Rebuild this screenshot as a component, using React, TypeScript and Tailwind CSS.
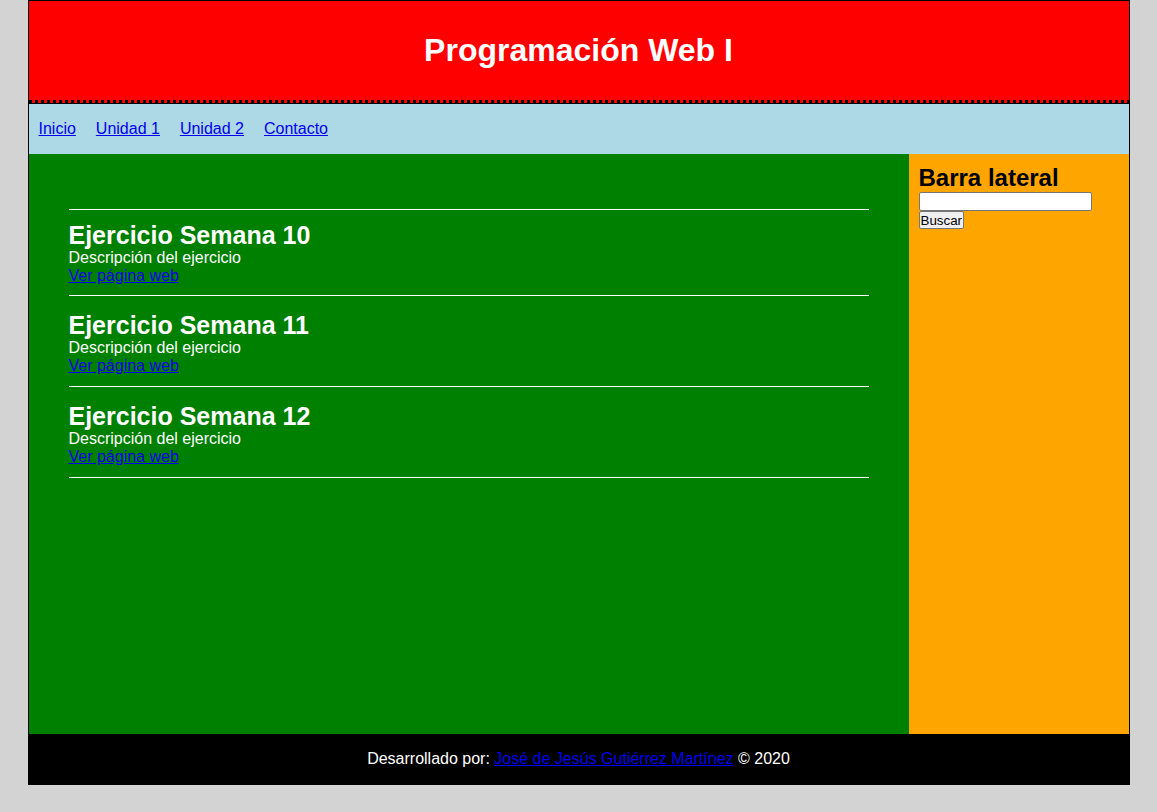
import React from "react";

// ---------- Data ----------
const ejercicios = [
  { semana: 10, pt: "pt-[11px]" },
  { semana: 11, pt: "pt-[15px]" },
  { semana: 12, pt: "pt-[15px]" },
];

const links = ["Inicio", "Unidad 1", "Unidad 2", "Contacto"];

// ---------- Page ----------
export default function App() {
  return (
    <div className="min-h-[812px] bg-[#d3d3d3] font-['Liberation_Sans',Arial,sans-serif]">
      <div className="mx-auto w-[1102px] border border-black">
        {/* Header */}
        <header className="flex h-[99px] items-center justify-center bg-[#ff0000]">
          <h1 className="text-[32px] font-bold leading-[37px] text-white">Programación Web I</h1>
        </header>
        {/* dashed separator */}
        <div className="h-[3px] bg-[repeating-linear-gradient(90deg,#000_0px,#000_3px,#ff0000_3px,#ff0000_6px)]"></div>

        {/* Nav */}
        <nav className="flex h-[51px] items-center gap-5 border-t border-black bg-[#add8e6] px-[10px] text-[16px] leading-[18px]">
          {links.map((l) => (
            <a key={l} href="#" className="text-[#0000ee] underline">
              {l}
            </a>
          ))}
        </nav>

        {/* Main + sidebar */}
        <div className="flex h-[580px]">
          <main className="w-[880px] bg-[#008000] px-10 pt-[55px]">
            <div className="border-t border-white">
              {ejercicios.map((e, i) => (
                <article
                  key={e.semana}
                  className={`${e.pt} border-b border-white ${i === 0 ? "pb-[10px]" : "pb-[11px]"}`}
                >
                  <h2 className="text-[25px] font-bold leading-[28px] text-white">
                    Ejercicio Semana {e.semana}
                  </h2>
                  <p className="text-[16px] leading-[18px] text-white">Descripción del ejercicio</p>
                  <a href="#" className="block w-fit text-[16px] leading-[18px] text-[#0000ee] underline">
                    Ver página web
                  </a>
                </article>
              ))}
            </div>
          </main>

          <aside className="w-[220px] bg-[#ffa500] px-[10px] pt-[10px]">
            <h2 className="text-[24px] font-bold leading-[28px] text-black">Barra lateral</h2>
            <input
              type="text"
              className="block h-[19px] w-[173px] rounded-[2px] border border-[#767676] bg-white px-[2px] text-[13px]"
            />
            <button className="block h-[18px] rounded-[2px] border border-[#767676] bg-[#efefef] px-[1px] text-[13.33px] leading-[15px] text-black">
              Buscar
            </button>
          </aside>
        </div>

        {/* Footer */}
        <footer className="flex h-[50px] items-center justify-center bg-black text-[16px] leading-[18px] text-white">
          <span>
            Desarrollado por:{" "}
            <a href="#" className="text-[#0000ee] underline">
              José de Jesús Gutiérrez Martínez
            </a>{" "}
            © 2020
          </span>
        </footer>
      </div>
    </div>
  );
}
